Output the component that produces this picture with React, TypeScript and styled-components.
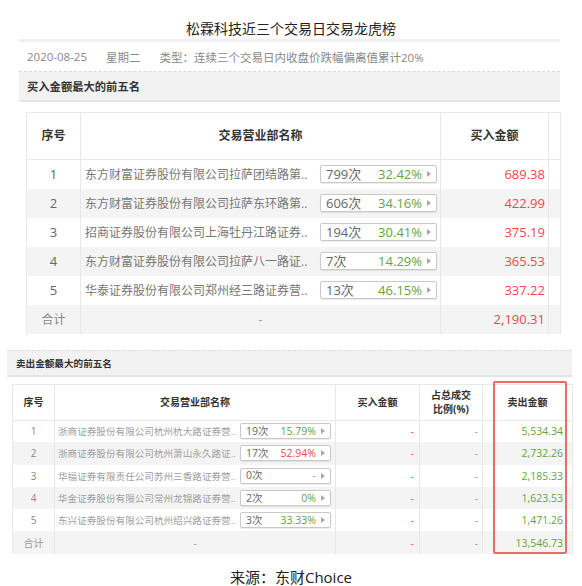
import React from 'react';
import styled, { createGlobalStyle } from 'styled-components';

const GREEN = '#62a53c';
const RED = '#f0474f';
const FONT = '"Open Sans", "Noto Sans CJK SC", sans-serif';

const GlobalStyle = createGlobalStyle`
  body {
    margin: 0;
    background: #fff;
    font-family: ${FONT};
  }
`;

type Tone = 'green' | 'red' | 'gray';

const toneColor = (t: Tone) => (t === 'green' ? GREEN : t === 'red' ? RED : '#999');

const buyRows = [
  { no: '1', name: '东方财富证券股份有限公司拉萨团结路第..', times: '799次', pct: '32.42%', amount: '689.38' },
  { no: '2', name: '东方财富证券股份有限公司拉萨东环路第..', times: '606次', pct: '34.16%', amount: '422.99' },
  { no: '3', name: '招商证券股份有限公司上海牡丹江路证券..', times: '194次', pct: '30.41%', amount: '375.19' },
  { no: '4', name: '东方财富证券股份有限公司拉萨八一路证..', times: '7次', pct: '14.29%', amount: '365.53' },
  { no: '5', name: '华泰证券股份有限公司郑州经三路证券营..', times: '13次', pct: '46.15%', amount: '337.22' },
];

const sellRows: { no: string; name: string; times: string; pct: string; tone: Tone; amount: string }[] = [
  { no: '1', name: '浙商证券股份有限公司杭州杭大路证券营..', times: '19次', pct: '15.79%', tone: 'green', amount: '5,534.34' },
  { no: '2', name: '浙商证券股份有限公司杭州萧山永久路证..', times: '17次', pct: '52.94%', tone: 'red', amount: '2,732.26' },
  { no: '3', name: '华福证券有限责任公司苏州三香路证券营..', times: '0次', pct: '-', tone: 'gray', amount: '2,185.33' },
  { no: '4', name: '华金证券股份有限公司常州龙锦路证券营..', times: '2次', pct: '0%', tone: 'green', amount: '1,623.53' },
  { no: '5', name: '东兴证券股份有限公司杭州绍兴路证券营..', times: '3次', pct: '33.33%', tone: 'green', amount: '1,471.26' },
];

const Page = styled.div`
  width: 582px;
  height: 586px;
  overflow: hidden;
`;

const Title = styled.div`
  padding-top: 18px;
  line-height: 21px;
  font-size: 14px;
  color: #222;
  text-align: center;
`;

const Panel = styled.div`
  margin: 0 22px 0 19px;
  border-top: 3px solid #f0f0f0;
`;

const InfoRow = styled.div`
  display: flex;
  align-items: center;
  height: 29px;
  padding-left: 8px;
  gap: 19px;
  font-size: 11.5px;
  color: #888;
  border-bottom: 1px dashed #d8d8d8;
`;

const SectionBar = styled.div<{ $small?: boolean }>`
  display: flex;
  align-items: center;
  height: ${p => (p.$small ? '24px' : '28px')};
  padding-left: ${p => (p.$small ? '9px' : '8px')};
  background: #f2f2f2;
  border-top: ${p => (p.$small ? '1px dashed #dcdcdc' : 'none')};
  border-bottom: 2px solid #e4e4e4;
  font-size: ${p => (p.$small ? '9.6px' : '11.3px')};
  font-weight: 700;
  color: #333;
`;

const Table = styled.table<{ $small?: boolean }>`
  table-layout: fixed;
  border-collapse: collapse;
  border-top: 1px solid #e8e8e8;
  border-left: 1px solid #e8e8e8;
  font-size: ${p => (p.$small ? '10px' : '12px')};
`;

const HeadCell = styled.th<{ $h: number }>`
  height: ${p => p.$h}px;
  padding: 0;
  font-weight: 700;
  color: #333;
  text-align: center;
  line-height: 1.45;
  border-right: 1px solid #e8e8e8;
  border-bottom: 1px solid #e8e8e8;
`;

const Row = styled.tr<{ $h: number; $shade?: boolean }>`
  height: ${p => p.$h}px;
  background: ${p => (p.$shade ? '#f4f4f4' : '#fff')};
`;

const Cell = styled.td<{ $align?: string; $color?: string; $pad?: number; $size?: number }>`
  padding: 0 ${p => p.$pad ?? 0}px 0 0;
  text-align: ${p => p.$align ?? 'center'};
  color: ${p => p.$color ?? '#666'};
  font-size: ${p => (p.$size ? `${p.$size}px` : 'inherit')};
  border-right: 1px solid #e8e8e8;
  white-space: nowrap;
  overflow: hidden;
`;

const NameWrap = styled.div<{ $small?: boolean }>`
  display: flex;
  align-items: center;
  gap: 2px;
  padding-left: ${p => (p.$small ? '3px' : '4px')};
  padding-right: ${p => (p.$small ? '4px' : '3px')};
`;

const NameText = styled.span<{ $small?: boolean }>`
  flex: 1;
  min-width: 0;
  overflow: hidden;
  white-space: nowrap;
  font-size: ${p => (p.$small ? '9.6px' : '12px')};
  color: ${p => (p.$small ? '#a0a0a0' : '#777')};
`;

const Chip = styled.div<{ $w: number; $h: number; $size: number }>`
  flex: none;
  display: flex;
  align-items: center;
  box-sizing: border-box;
  width: ${p => p.$w}px;
  height: ${p => p.$h}px;
  padding: 0 5px;
  border: 1px solid #c9c9c9;
  border-radius: 2px;
  background: #fff;
  box-shadow: 0 1px 1px rgba(0, 0, 0, 0.08);
  font-size: ${p => p.$size}px;
  line-height: 1;
`;

const ChipTimes = styled.span`
  color: #666;
`;

const ChipPct = styled.span<{ $tone: Tone }>`
  flex: 1;
  text-align: right;
  color: ${p => toneColor(p.$tone)};
`;

const Arrow = styled.span`
  margin-left: 5px;
  width: 0;
  height: 0;
  border-top: 3px solid transparent;
  border-bottom: 3px solid transparent;
  border-left: 4px solid #a8a8a8;
`;

const BuyTable = styled(Table)`
  margin: 10px 0 0 26px;
  width: 534px;
`;

const SellSection = styled.div`
  margin: 16px 10px 0 7px;
`;

const SellTableWrap = styled.div`
  position: relative;
  margin: 7px 0 0 5px;
`;

const SellTable = styled(Table)`
  width: 560px;
`;

const Highlight = styled.div`
  position: absolute;
  left: 481px;
  top: -3px;
  width: 74px;
  height: 173px;
  box-sizing: border-box;
  border: 2px solid #ee6a6a;
  border-radius: 2px;
  pointer-events: none;
`;

const Source = styled.div`
  margin-top: 12px;
  text-align: center;
  font-size: 15px;
  color: #222;
`;

export default function App() {
  return (
    <Page>
      <GlobalStyle />
      <Title>松霖科技近三个交易日交易龙虎榜</Title>
      <Panel>
        <InfoRow>
          <span>2020-08-25</span>
          <span>星期二</span>
          <span>类型：连续三个交易日内收盘价跌幅偏离值累计20%</span>
        </InfoRow>
        <SectionBar>买入金额最大的前五名</SectionBar>
      </Panel>

      <BuyTable>
        <colgroup>
          <col style={{ width: 54 }} />
          <col style={{ width: 360 }} />
          <col style={{ width: 108 }} />
          <col style={{ width: 12 }} />
        </colgroup>
        <thead>
          <tr>
            <HeadCell $h={46}>序号</HeadCell>
            <HeadCell $h={46}>交易营业部名称</HeadCell>
            <HeadCell $h={46}>买入金额</HeadCell>
            <HeadCell $h={46} />
          </tr>
        </thead>
        <tbody>
          {buyRows.map((r, i) => (
            <Row key={r.no} $h={29} $shade={i % 2 === 1}>
              <Cell $size={13}>{r.no}</Cell>
              <Cell $align="left">
                <NameWrap>
                  <NameText>{r.name}</NameText>
                  <Chip $w={117} $h={18} $size={13}>
                    <ChipTimes>{r.times}</ChipTimes>
                    <ChipPct $tone="green">{r.pct}</ChipPct>
                    <Arrow />
                  </Chip>
                </NameWrap>
              </Cell>
              <Cell $align="right" $pad={3} $color={RED} $size={13}>{r.amount}</Cell>
              <Cell />
            </Row>
          ))}
          <Row $h={29} $shade>
            <Cell $color="#888">合计</Cell>
            <Cell $color="#999">-</Cell>
            <Cell $align="right" $pad={3} $color={RED} $size={13}>2,190.31</Cell>
            <Cell />
          </Row>
        </tbody>
      </BuyTable>

      <SellSection>
        <SectionBar $small>卖出金额最大的前五名</SectionBar>
        <SellTableWrap>
          <SellTable $small>
            <colgroup>
              <col style={{ width: 42 }} />
              <col style={{ width: 281 }} />
              <col style={{ width: 84 }} />
              <col style={{ width: 63 }} />
              <col style={{ width: 90 }} />
            </colgroup>
            <thead>
              <tr>
                <HeadCell $h={35}>序号</HeadCell>
                <HeadCell $h={35}>交易营业部名称</HeadCell>
                <HeadCell $h={35}>买入金额</HeadCell>
                <HeadCell $h={35}>
                  占总成交
                  <br />
                  比例(%)
                </HeadCell>
                <HeadCell $h={35}>卖出金额</HeadCell>
              </tr>
            </thead>
            <tbody>
              {sellRows.map((r, i) => (
                <Row key={r.no} $h={22.3} $shade={i % 2 === 1}>
                  <Cell $color="#888">{r.no}</Cell>
                  <Cell $align="left">
                    <NameWrap $small>
                      <NameText $small>{r.name}</NameText>
                      <Chip $w={91} $h={16} $size={10.5}>
                        <ChipTimes>{r.times}</ChipTimes>
                        <ChipPct $tone={r.tone}>{r.pct}</ChipPct>
                        <Arrow />
                      </Chip>
                    </NameWrap>
                  </Cell>
                  <Cell $align="right" $pad={5} $color={RED}>-</Cell>
                  <Cell $align="right" $pad={4} $color="#999">-</Cell>
                  <Cell $align="right" $pad={9} $color={GREEN} $size={10.5}>{r.amount}</Cell>
                </Row>
              ))}
              <Row $h={22.3} $shade>
                <Cell $color="#999">合计</Cell>
                <Cell $color="#999">-</Cell>
                <Cell $align="right" $pad={5} $color={RED}>-</Cell>
                <Cell $align="right" $pad={4} $color="#999">-</Cell>
                <Cell $align="right" $pad={9} $color={GREEN} $size={10.5}>13,546.73</Cell>
              </Row>
            </tbody>
          </SellTable>
          <Highlight />
        </SellTableWrap>
      </SellSection>

      <Source>来源：东财Choice</Source>
    </Page>
  );
}
